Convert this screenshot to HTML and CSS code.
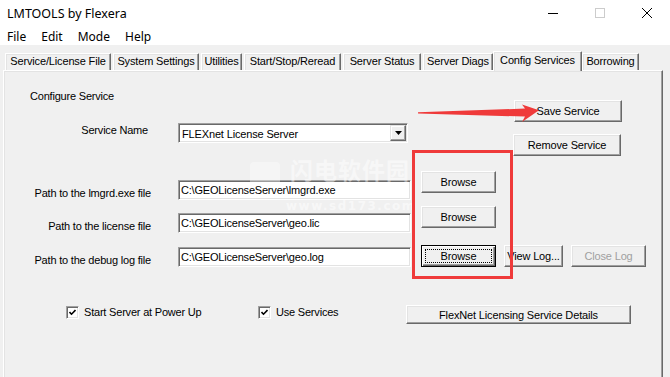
FILE: index.html
```html
<!DOCTYPE html>
<html>
<head>
<meta charset="utf-8">
<title>LMTOOLS by Flexera</title>
<link rel="stylesheet" href="styles.css">
</head>
<body>
<div class="window">
  <header class="titlebar">
    <span class="title">LMTOOLS by Flexera</span>
    <div class="controls">
      <span class="ctl"><svg width="12" height="12" viewBox="0 0 12 12"><line x1="1" y1="6.5" x2="11" y2="6.5" stroke="#000" stroke-width="1"/></svg></span>
      <span class="ctl"><svg width="12" height="12" viewBox="0 0 12 12"><rect x="1.5" y="1.5" width="9" height="9" fill="none" stroke="#cccccc" stroke-width="1"/></svg></span>
      <span class="ctl"><svg width="12" height="12" viewBox="0 0 12 12"><path d="M1 1 L11 11 M11 1 L1 11" stroke="#000" stroke-width="1" fill="none"/></svg></span>
    </div>
  </header>
  <nav class="menubar">
    <span class="menu">File</span>
    <span class="menu">Edit</span>
    <span class="menu">Mode</span>
    <span class="menu">Help</span>
  </nav>
  <div class="tabstrip">
    <div class="tab t1">Service/License File</div>
    <div class="tab t2">System Settings</div>
    <div class="tab t3">Utilities</div>
    <div class="tab t4">Start/Stop/Reread</div>
    <div class="tab t5">Server Status</div>
    <div class="tab t6">Server Diags</div>
    <div class="tab t7 selected">Config Services</div>
    <div class="tab t8">Borrowing</div>
  </div>
  <section class="panel">
    <div class="row row1">
      <span class="heading">Configure Service</span>
      <button class="btn btn-save">Save Service</button>
    </div>
    <div class="row row2">
      <span class="label label-name">Service Name</span>
      <div class="combo">
        <span class="combo-text">FLEXnet License Server</span>
        <span class="combo-btn"><svg width="7" height="4" viewBox="0 0 7 4"><polygon points="0,0 7,0 3.5,4" fill="#000"/></svg></span>
      </div>
      <button class="btn btn-remove">Remove Service</button>
    </div>
    <div class="row row3">
      <span class="label">Path to the lmgrd.exe file</span>
      <div class="field">C:\GEOLicenseServer\lmgrd.exe</div>
      <button class="btn btn-browse">Browse</button>
    </div>
    <div class="row row4">
      <span class="label">Path to the license file</span>
      <div class="field">C:\GEOLicenseServer\geo.lic</div>
      <button class="btn btn-browse">Browse</button>
    </div>
    <div class="row row5">
      <span class="label">Path to the debug log file</span>
      <div class="field">C:\GEOLicenseServer\geo.log</div>
      <button class="btn btn-browse focused">Browse</button>
      <button class="btn btn-view">View Log...</button>
      <button class="btn btn-close disabled">Close Log</button>
    </div>
    <div class="row row6">
      <label class="check check1"><span class="box"><svg width="7" height="7" viewBox="0 0 7 7"><path d="M0.5 3 L2.5 5.2 L6.5 1" stroke="#000" stroke-width="1.6" fill="none"/></svg></span><span class="check-text">Start Server at Power Up</span></label>
      <label class="check check2"><span class="box"><svg width="7" height="7" viewBox="0 0 7 7"><path d="M0.5 3 L2.5 5.2 L6.5 1" stroke="#000" stroke-width="1.6" fill="none"/></svg></span><span class="check-text">Use Services</span></label>
      <button class="btn btn-details">FlexNet Licensing Service Details</button>
    </div>
  </section>

  <div class="watermark">
    <span class="wm-logo"></span>
    <span class="wm-cn">闪电软件园</span>
    <span class="wm-url">www.sd173.com</span>
  </div>
  <div class="redbox"></div>
  <svg class="arrow" width="130" height="24" viewBox="415 102 130 24">
    <polygon points="418,112.3 525,108.6 522,104.5 539,110.3 522,122 525,116.6 418,113.6" fill="#ef3a3a"/>
  </svg>
</div>
</body>
</html>
```

FILE: styles.css
```css
* { box-sizing: border-box; }

html, body {
  margin: 0;
  padding: 0;
}

body {
  width: 670px;
  height: 377px;
  overflow: hidden;
  background: #f0f0f0;
  font-family: "Liberation Sans", Arial, sans-serif;
  font-size: 11px;
  color: #000;
}

.window {
  position: relative;
  width: 670px;
  height: 377px;
  overflow: hidden;
  background: #f0f0f0;
}

/* title bar */
.titlebar {
  height: 26px;
  background: #fff;
  display: flex;
  align-items: center;
  justify-content: space-between;
}

.title {
  padding-left: 7px;
  font-family: "Noto Sans", "Open Sans", sans-serif;
  font-size: 12.5px;
  letter-spacing: 0;
}

.controls {
  display: flex;
  align-items: center;
  height: 26px;
  padding-right: 17px;
}

.ctl {
  display: flex;
  align-items: center;
  justify-content: center;
  width: 12px;
  height: 12px;
  margin-left: 35px;
}

/* menu bar */
.menubar {
  height: 19px;
  background: #fff;
  display: flex;
  align-items: flex-start;
  font-family: "Noto Sans", "Open Sans", sans-serif;
  font-size: 12px;
}

.menu {
  padding: 2px 7px 0 7px;
  line-height: 17px;
}

.menu + .menu {
  margin-left: 1px;
}

/* tabs */
.tabstrip {
  height: 25px;
  display: flex;
  align-items: flex-end;
  padding-left: 5px;
  position: relative;
  z-index: 2;
}

.tab {
  height: 17px;
  margin-right: 2px;
  border-top: 1px solid #fff;
  border-left: 1px solid #fff;
  border-right: 1px solid #696969;
  box-shadow: inset -1px 0 #a0a0a0, inset 1px 1px #e3e3e3;
  background: #f0f0f0;
  text-align: center;
  line-height: 15px;
  letter-spacing: -0.15px;
  white-space: nowrap;
  border-radius: 1px 1px 0 0;
}

.t1 { width: 106px; }
.t2 { width: 86px; }
.t3 { width: 41px; }
.t4 { width: 97px; }
.t5 { width: 78px; }
.t6 { width: 70px; margin-right: 0; }
.t7 { width: 89px; margin-right: 0; }
.t8 { width: 57px; }

.tab.selected {
  height: 20px;
  margin-bottom: -1px;
  line-height: 16px;
  position: relative;
  z-index: 3;
}

/* panel */
.panel {
  margin-left: 3px;
  width: 660px;
  height: 307px;
  border-top: 1px solid #fff;
  border-left: 1px solid #fff;
  border-right: 1px solid #696969;
  box-shadow: inset -1px 0 #a0a0a0, inset 1px 1px #e3e3e3;
}

.row {
  display: flex;
  align-items: flex-start;
}

.row1 { height: 52px; }
.row2 { height: 48px; }
.row3 { height: 35px; }
.row4 { height: 39px; }
.row5 { height: 60px; }
.row6 { height: 40px; }

.heading {
  margin-left: 26px;
  margin-top: 19px;
  line-height: 13px;
  letter-spacing: -0.2px;
}

.label {
  width: 147px;
  text-align: right;
  line-height: 13px;
  letter-spacing: -0.2px;
  white-space: nowrap;
}

.label-name { padding-right: 3px; margin-top: 1px; }
.row3 .label { margin-top: 16px; }
.row4 .label { margin-top: 14px; }
.row5 .label { margin-top: 9px; }

/* buttons */
.btn {
  font-family: "Liberation Sans", Arial, sans-serif;
  font-size: 11px;
  letter-spacing: -0.15px;
  color: #000;
  background: #f0f0f0;
  border: 1px solid;
  border-color: #fff #696969 #696969 #fff;
  box-shadow: inset -1px -1px #a0a0a0, inset 1px 1px #e3e3e3;
  padding: 0;
  margin: 0;
  height: 22px;
  line-height: 18px;
  text-align: center;
  white-space: nowrap;
  position: relative;
}

.btn-save {
  width: 108px;
  margin-left: auto;
  margin-right: 40px;
  margin-top: 29px;
}

.btn-remove {
  width: 108px;
  margin-left: auto;
  margin-right: 41px;
  margin-top: 11px;
}

.btn-browse {
  width: 75px;
  margin-left: 10px;
}

.btn-browse.focused {
  border: 1px solid #000;
  box-shadow: inset 1px 1px #fff, inset -1px -1px #696969, inset -2px -2px #a0a0a0;
}

.btn-browse.focused::after {
  content: "";
  position: absolute;
  left: 3px;
  top: 3px;
  right: 3px;
  bottom: 3px;
  border: 1px dotted #000;
}

.btn-view {
  width: 59px;
  margin-left: 8px;
}

.btn-close {
  width: 75px;
  margin-left: 8px;
}

.btn.disabled {
  color: #a0a0a0;
}

.btn-details {
  width: 225px;
  height: 19px;
  line-height: 16px;
  margin-left: auto;
  margin-right: 31px;
}

/* combo and fields */
.combo {
  margin-left: 27px;
  width: 230px;
  height: 20px;
  background: #fff;
  border: 1px solid;
  border-color: #a0a0a0 #fff #fff #a0a0a0;
  box-shadow: inset 1px 1px #696969, inset -1px -1px #e3e3e3;
  display: flex;
  align-items: center;
  padding: 1px 1px 1px 3px;
}

.combo-text {
  flex: 1;
  line-height: 16px;
  padding-top: 1px;
  letter-spacing: -0.15px;
}

.combo-btn {
  width: 16px;
  height: 16px;
  background: #f0f0f0;
  border: 1px solid;
  border-color: #e3e3e3 #696969 #696969 #e3e3e3;
  box-shadow: inset -1px -1px #a0a0a0, inset 1px 1px #fff;
  display: flex;
  align-items: center;
  justify-content: center;
}

.field {
  margin-left: 27px;
  width: 233px;
  height: 20px;
  background: #fff;
  border: 1px solid;
  border-color: #a0a0a0 #fff #fff #a0a0a0;
  box-shadow: inset 1px 1px #696969, inset -1px -1px #e3e3e3;
  padding-left: 2px;
  line-height: 18px;
  letter-spacing: -0.2px;
  white-space: nowrap;
  overflow: hidden;
}

.row3 .field { margin-top: 9px; }
.row4 .field { margin-top: 7px; }
.row5 .field { margin-top: 2px; }

/* checkboxes */
.check {
  display: flex;
  align-items: center;
  height: 13px;
  margin-top: 1px;
}

.check1 {
  margin-left: 62px;
  width: 192px;
}

.check2 {
  width: 140px;
}

.box {
  width: 13px;
  height: 13px;
  background: #fff;
  border: 1px solid;
  border-color: #a0a0a0 #fff #fff #a0a0a0;
  box-shadow: inset 1px 1px #696969, inset -1px -1px #e3e3e3;
  display: flex;
  align-items: center;
  justify-content: center;
  flex: none;
}

.check-text {
  margin-left: 5px;
  line-height: 13px;
  letter-spacing: -0.2px;
  white-space: nowrap;
}

.row6 .btn-details { margin-top: 0; }

/* overlays */
.watermark {
  position: absolute;
  left: 250px;
  top: 158px;
  width: 165px;
  height: 54px;
  color: rgba(255, 255, 255, 0.5);
  pointer-events: none;
  z-index: 4;
}

.wm-logo {
  position: absolute;
  left: 0;
  top: 4px;
  width: 30px;
  height: 24px;
  border-radius: 4px;
  background: rgba(255, 255, 255, 0.35);
}

.wm-cn {
  position: absolute;
  left: 40px;
  top: 0;
  font-family: "Noto Sans CJK SC", sans-serif;
  font-weight: bold;
  font-size: 23px;
  line-height: 22px;
  letter-spacing: 1px;
  white-space: nowrap;
}

.wm-url {
  position: absolute;
  left: 36px;
  top: 43px;
  font-family: "DejaVu Sans", sans-serif;
  font-weight: bold;
  font-size: 12px;
  line-height: 11px;
  letter-spacing: 1.5px;
  white-space: nowrap;
}

.redbox {
  position: absolute;
  left: 412px;
  top: 150px;
  width: 101px;
  height: 129px;
  border: 3px solid #ef3a3a;
  z-index: 5;
}

.arrow {
  position: absolute;
  left: 415px;
  top: 102px;
  z-index: 6;
}
```
